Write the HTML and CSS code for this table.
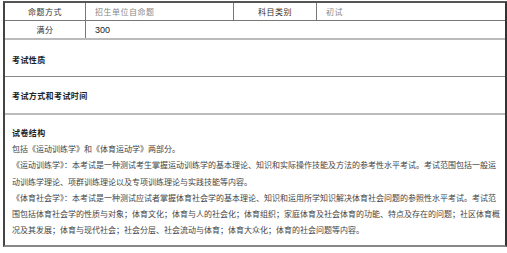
FILE: index.html
```html
<!DOCTYPE html>
<html lang="zh">
<head>
<meta charset="utf-8">
<link rel="stylesheet" href="styles.css">
</head>
<body>
<div class="sheet">
  <div class="row row-top">
    <div class="cell label">命题方式</div>
    <div class="cell value muted">招生单位自命题</div>
    <div class="cell label">科目类别</div>
    <div class="cell value muted">初试</div>
  </div>
  <div class="row row-score">
    <div class="cell label">满分</div>
    <div class="cell value num">300</div>
  </div>
  <div class="section sec-nature">
    <div class="title">考试性质</div>
  </div>
  <div class="section sec-time">
    <div class="title">考试方式和考试时间</div>
  </div>
  <div class="section sec-structure">
    <div class="title">试卷结构</div>
    <p class="para">包括《运动训练学》和《体育运动学》两部分。</p>
    <p class="para">《运动训练学》：本考试是一种测试考生掌握运动训练学的基本理论、知识和实际操作技能及方法的参考性水平考试。考试范围包括一般运动训练学理论、项群训练理论以及专项训练理论与实践技能等内容。</p>
    <p class="para">《体育社会学》：本考试是一种测试应试者掌握体育社会学的基本理论、知识和运用所学知识解决体育社会问题的参照性水平考试。考试范围包括体育社会学的性质与对象；体育文化；体育与人的社会化；体育组织；家庭体育及社会体育的功能、特点及存在的问题；社区体育概况及其发展；体育与现代社会；社会分层、社会流动与体育；体育大众化；体育的社会问题等内容。</p>
  </div>
</div>
</body>
</html>
```

FILE: styles.css
```css
html, body {
  margin: 0;
  padding: 0;
  background: #ffffff;
}
body {
  font-family: "Noto Sans CJK SC", "Noto Sans", sans-serif;
  color: #333;
}
.sheet {
  margin: 1px 0 0 3px;
  width: 500px;
  border-top: 2px solid #555;
  border-left: 2px solid #444;
  border-right: 2px solid #333;
  border-bottom: 2px solid #888;
}
.row {
  display: grid;
  height: 17px;
  border-bottom: 1px solid #777;
}
.row-top {
  grid-template-columns: 81px 148px 83px 1fr;
}
.row-score {
  grid-template-columns: 81px 1fr;
  border-bottom: 2px solid #bbb;
}
.cell {
  display: flex;
  align-items: center;
  font-size: 8px;
  letter-spacing: 0.5px;
  border-right: 1px solid #777;
  white-space: nowrap;
  overflow: hidden;
}
.cell:last-child {
  border-right: none;
}
.label {
  justify-content: center;
  color: #333;
}
.value {
  padding-left: 9px;
}
.muted {
  color: #888;
}
.num {
  font-family: "Liberation Sans", "Noto Sans", sans-serif;
  font-size: 9px;
  color: #222;
  letter-spacing: 0;
}
.section {
  padding-left: 7px;
  padding-right: 3px;
}
.title {
  font-size: 8px;
  font-weight: bold;
  color: #222;
  letter-spacing: 0.4px;
}
.sec-nature {
  height: 37px;
  border-bottom: 1px solid #888;
  display: flex;
  align-items: center;
  padding-top: 2px;
  box-sizing: border-box;
}
.sec-time {
  height: 36px;
  border-bottom: 2px solid #bbb;
  display: flex;
  align-items: center;
}
.sec-structure {
  padding-top: 12px;
  padding-bottom: 6px;
}
.sec-structure .title {
  line-height: 12px;
  margin-bottom: 2px;
}
.para {
  margin: 0;
  font-size: 8px;
  line-height: 16.3px;
  letter-spacing: 0;
  color: #444;
}
```
